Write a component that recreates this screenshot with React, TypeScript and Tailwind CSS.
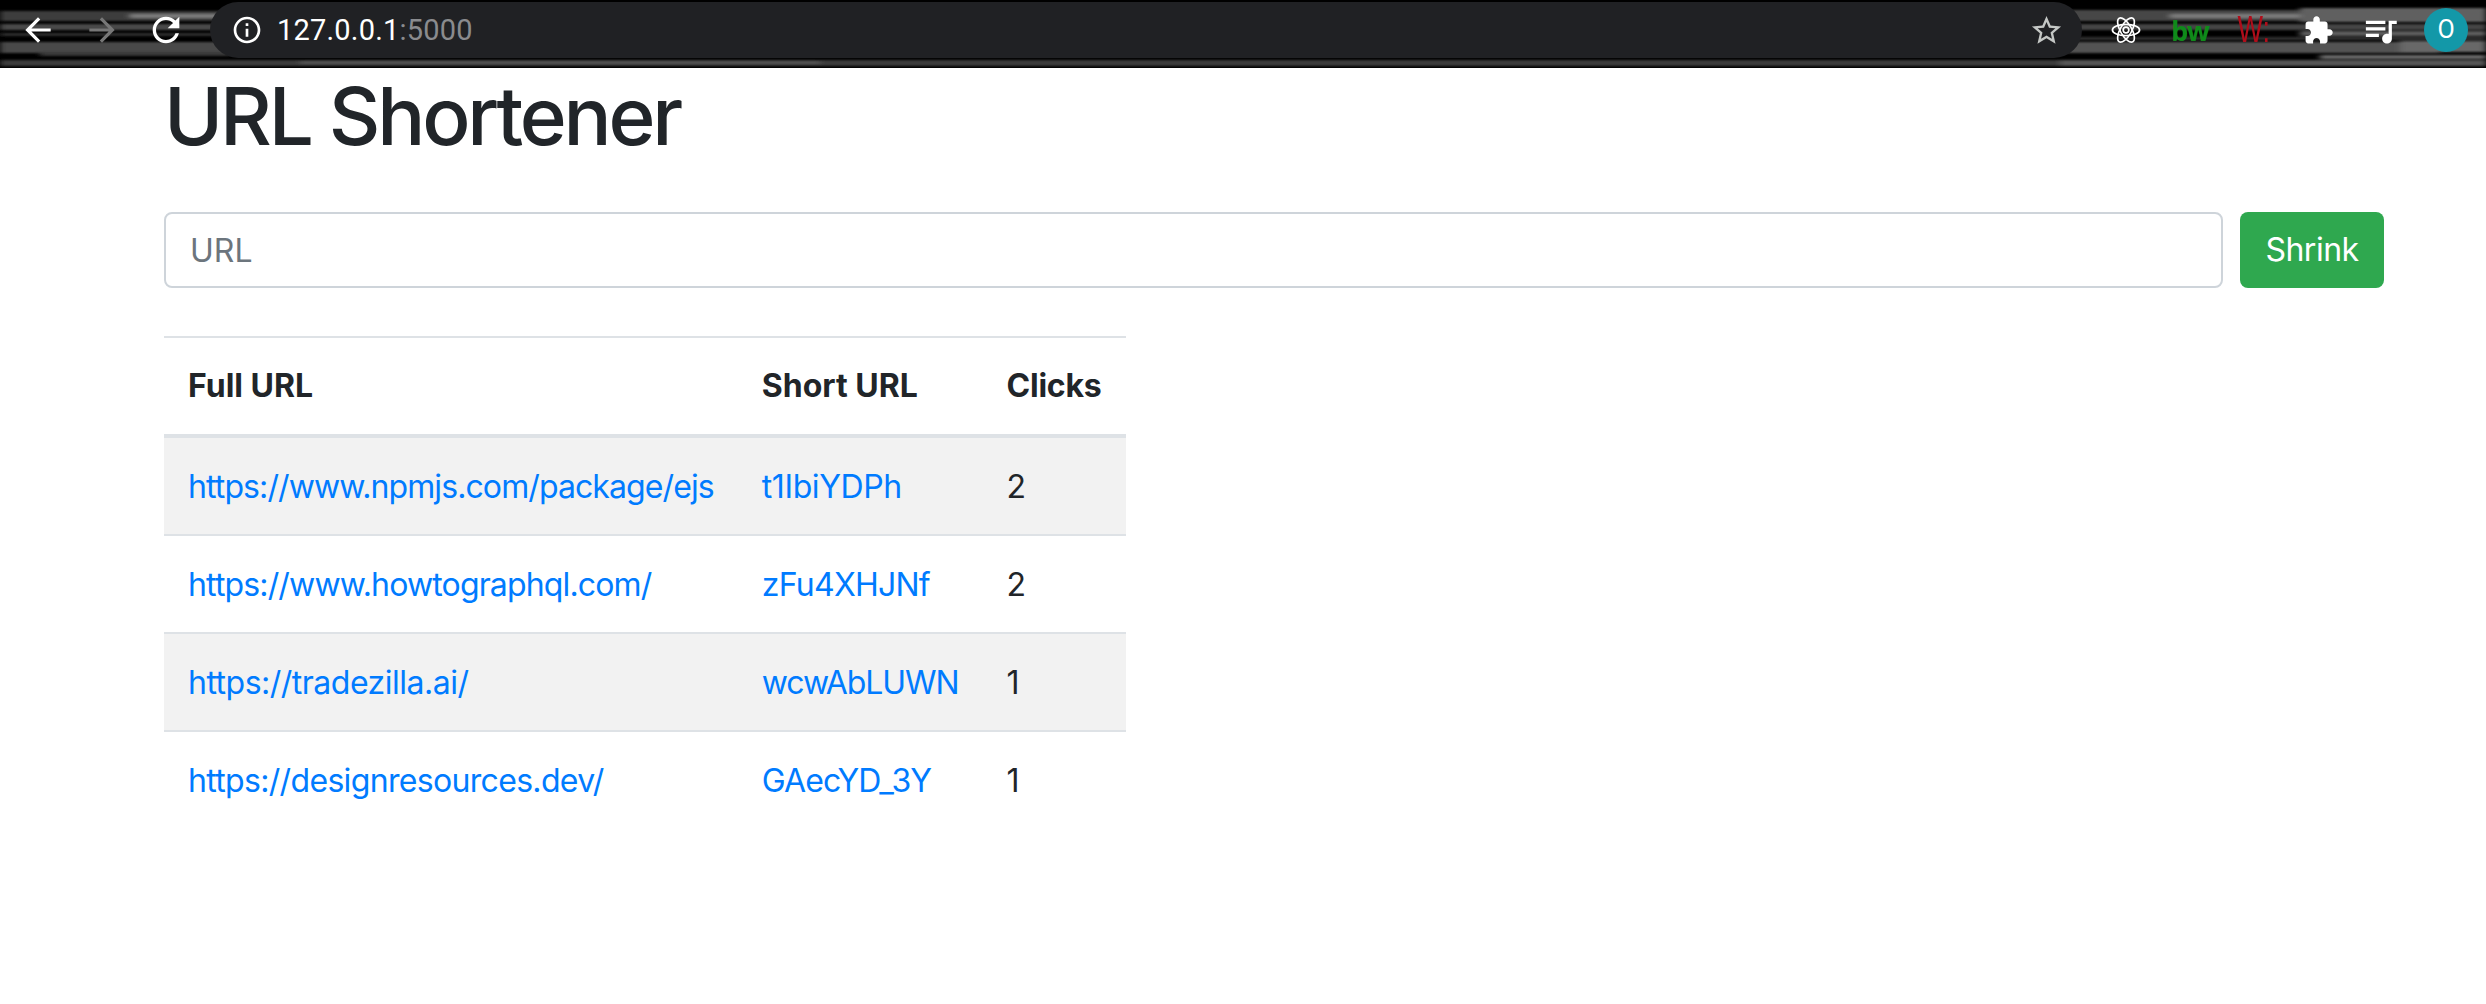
const rows = [
  ["https://www.npmjs.com/package/ejs", "t1IbiYDPh", "2", "tracking-[-0.9px]", "tracking-[-0.4px]"],
  ["https://www.howtographql.com/", "zFu4XHJNf", "2", "tracking-[-0.85px]", "tracking-[-0.75px]"],
  ["https://tradezilla.ai/", "wcwAbLUWN", "1", "tracking-[-0.5px]", "tracking-[-1.1px]"],
  ["https://designresources.dev/", "GAecYD_3Y", "1", "tracking-[-0.67px]", "tracking-[-0.93px]"],
];

const streaks: [number, number, number, number, string][] = [
  [0, 11, 230, 10, "#3c3c3c"],
  [130, 14, 90, 4, "#7a7a7a"],
  [0, 24, 230, 6, "#4a4a4a"],
  [0, 33, 230, 3, "#2e2e2e"],
  [0, 42, 230, 11, "#4a4a4a"],
  [40, 52, 190, 4, "#383838"],
  [0, 60, 2486, 6, "#3a3a3a"],
  [300, 61, 520, 3, "#525252"],
  [2060, 10, 426, 11, "#464646"],
  [2170, 14, 130, 4, "#7a7a7a"],
  [2300, 8, 186, 14, "#606060"],
  [2060, 24, 426, 6, "#444444"],
  [2300, 31, 186, 5, "#5c5c5c"],
  [2060, 37, 426, 3, "#303030"],
  [2060, 42, 380, 11, "#525252"],
  [2400, 41, 86, 11, "#686868"],
  [2060, 60, 426, 6, "#545454"],
  [2320, 55, 166, 4, "#686868"],
];

function Mat({ d, className }: { d: string; className: string }) {
  return (
    <svg viewBox="0 0 24 24" fill="currentColor" className={className}>
      <path d={d} />
    </svg>
  );
}

const back = "M20 11H7.83l5.59-5.59L12 4l-8 8 8 8 1.41-1.41L7.83 13H20v-2z";
const forward = "M4 11h12.17l-5.59-5.59L12 4l8 8-8 8-1.41-1.41L16.17 13H4v-2z";
const reload = "M17.65 6.35C16.2 4.9 14.21 4 12 4c-4.42 0-7.99 3.58-7.99 8s3.57 8 7.99 8c3.73 0 6.84-2.55 7.73-6h-2.08c-.82 2.33-3.04 4-5.65 4-3.31 0-6-2.69-6-6s2.69-6 6-6c1.66 0 3.14.69 4.22 1.78L13 11h7V4l-2.35 2.35z";
const info = "M11 7h2v2h-2zm0 4h2v6h-2zm1-9C6.48 2 2 6.48 2 12s4.48 10 10 10 10-4.48 10-10S17.52 2 12 2zm0 18c-4.41 0-8-3.59-8-8s3.59-8 8-8 8 3.59 8 8-3.59 8-8 8z";
const star = "M22 9.24l-7.19-.62L12 2 9.19 8.63 2 9.24l5.46 4.73L5.82 21 12 17.27 18.18 21l-1.63-7.03L22 9.24zM12 15.4l-3.76 2.27 1-4.28-3.32-2.88 4.38-.38L12 6.1l1.71 4.04 4.38.38-3.32 2.88 1 4.28L12 15.4z";
const puzzle = "M20.5 11H19V7c0-1.1-.9-2-2-2h-4V3.5C13 2.12 11.88 1 10.5 1S8 2.12 8 3.5V5H4c-1.1 0-1.99.9-1.99 2v3.8H3.5c1.49 0 2.7 1.21 2.7 2.7s-1.21 2.7-2.7 2.7H2V20c0 1.1.9 2 2 2h3.8v-1.5c0-1.49 1.21-2.7 2.7-2.7 1.49 0 2.7 1.21 2.7 2.7V22H17c1.1 0 2-.9 2-2v-4h1.5c1.38 0 2.5-1.12 2.5-2.5S21.88 11 20.5 11z";
const queue = "M15 6H3v2h12V6zm0 4H3v2h12v-2zM3 16h8v-2H3v2zM17 6v8.18c-.31-.11-.65-.18-1-.18-1.66 0-3 1.34-3 3s1.34 3 3 3 3-1.34 3-3V8h3V6h-5z";

function Atom() {
  return (
    <svg viewBox="0 0 32 32" fill="none" stroke="white" strokeWidth="1.8" className="w-[30px] h-[30px]">
      <ellipse cx="16" cy="16" rx="14.5" ry="6" />
      <ellipse cx="16" cy="16" rx="14.5" ry="6" transform="rotate(60 16 16)" />
      <ellipse cx="16" cy="16" rx="14.5" ry="6" transform="rotate(120 16 16)" />
      <circle cx="16" cy="16" r="3" />
    </svg>
  );
}

function Slot({ children }: { children: React.ReactNode }) {
  return <div className="flex items-center justify-center w-[64px] h-[56px] shrink-0">{children}</div>;
}

export default function App() {
  return (
    <div className="min-h-screen bg-white text-[#212529] font-['Inter','Liberation_Sans',sans-serif]">
      <header className="relative h-[68px] bg-black overflow-hidden">
        <svg className="absolute inset-0 w-full h-full" viewBox="0 0 2486 68" preserveAspectRatio="none">
          <defs>
            <filter id="soft" x="-5%" y="-50%" width="110%" height="200%">
              <feGaussianBlur stdDeviation="3 0.9" />
            </filter>
          </defs>
          <g filter="url(#soft)">
            {streaks.map(([x, y, w, h, c], i) => (
              <rect key={i} x={x} y={y} width={w} height={h} fill={c} />
            ))}
          </g>
        </svg>
        <div className="relative flex items-start pt-[2px] pl-[6px] pr-[8px]">
          <Slot><Mat d={back} className="w-[38px] h-[38px] text-white" /></Slot>
          <Slot><Mat d={forward} className="w-[38px] h-[38px] text-[#777777]" /></Slot>
          <Slot><Mat d={reload} className="w-[40px] h-[40px] text-white" /></Slot>
          <div className="flex items-center flex-1 h-[56px] ml-[12px] pl-[21px] pr-[18px] rounded-full bg-[#202124] font-['Roboto',sans-serif]">
            <Mat d={info} className="w-[32px] h-[32px] text-white" />
            <span className="ml-[14px] text-[29px] leading-none text-white tracking-[0.2px]">
              127.0.0.1<span className="text-[#8a8b8e]">:5000</span>
            </span>
            <Mat d={star} className="w-[35px] h-[35px] text-[#c4c7c5] ml-auto" />
          </div>
          <div className="flex items-center ml-[12px]">
            <Slot><Atom /></Slot>
            <Slot><span className="text-[27px] leading-none font-bold text-[#0f8a1a] font-['Noto_Sans',sans-serif] tracking-[-1px]">bw</span></Slot>
            <Slot><span className="scale-x-[0.75] text-[36px] leading-none text-[#b00d1a] font-['Liberation_Sans',sans-serif]">W:</span></Slot>
            <Slot><Mat d={puzzle} className="w-[31px] h-[31px] text-white" /></Slot>
            <Slot><Mat d={queue} className="w-[39px] h-[39px] text-white mr-[4px]" /></Slot>
            <Slot><div className="flex items-center justify-center w-[44px] h-[44px] rounded-full bg-[#1398a8] text-white text-[25px] font-['Roboto',sans-serif]">O</div></Slot>
          </div>
        </div>
      </header>
      <main className="pl-[164px] pr-[102px]">
        <h1 className="text-[80px] leading-[96px] font-medium tracking-[-3.2px]">URL Shortener</h1>
        <form className="flex gap-[17px] mt-[48px]">
          <input
            placeholder="URL"
            className="flex-1 h-[76px] px-[24px] rounded-[8px] border-2 border-[#ced4da] bg-white text-[32px] placeholder:text-[#6c757d]"
          />
          <button type="button" className="w-[144px] h-[76px] rounded-[8px] bg-[#2fa84f] text-white text-[32px] tracking-[-0.5px]">Shrink</button>
        </form>
        <table className="mt-[48px] text-[32px] leading-[48px] border-collapse">
          <thead>
            <tr className="border-t-2 border-[#dee2e6]">
              <th className="p-[24px] text-left font-bold border-b-4 border-[#dee2e6]">Full URL</th>
              <th className="p-[24px] text-left font-bold border-b-4 border-[#dee2e6] w-[244px]">Short URL</th>
              <th className="p-[24px] text-left font-bold border-b-4 border-[#dee2e6] tracking-[-0.2px]">Clicks</th>
            </tr>
          </thead>
          <tbody>
            {rows.map((r, i) => (
              <tr key={r[1]} className={`${i % 2 === 0 ? "bg-[#f2f2f2]" : ""} ${i > 0 ? "border-t-2 border-[#dee2e6]" : ""}`}>
                <td className={`px-[24px] pt-[25px] pb-[23px] text-[#007bff] ${r[3]}`}><a href="#">{r[0]}</a></td>
                <td className={`px-[24px] pt-[25px] pb-[23px] text-[#007bff] ${r[4]}`}><a href="#">{r[1]}</a></td>
                <td className="px-[24px] pt-[25px] pb-[23px]">{r[2]}</td>
              </tr>
            ))}
          </tbody>
        </table>
      </main>
    </div>
  );
}
